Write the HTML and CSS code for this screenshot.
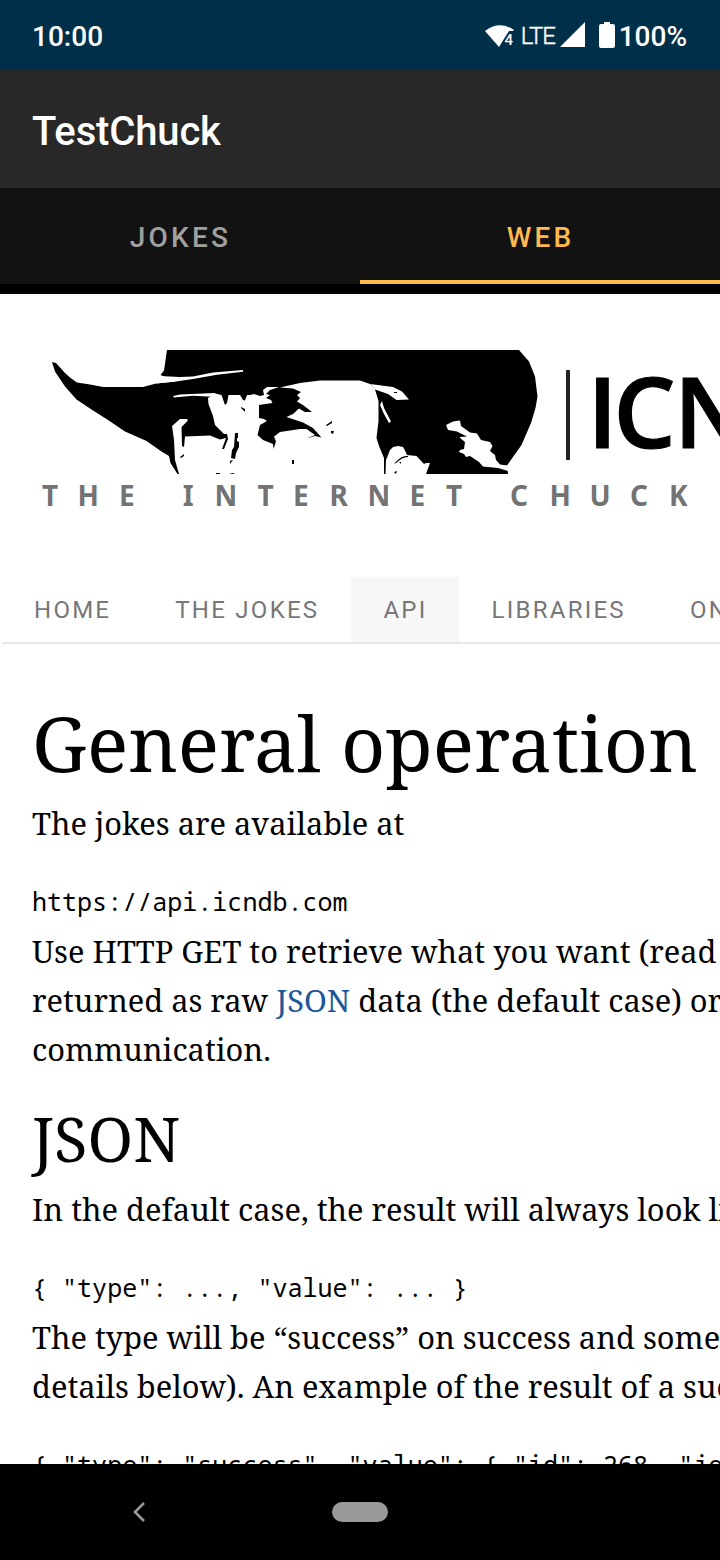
FILE: index.html
```html
<!DOCTYPE html>
<html lang="en">
<head>
<meta charset="utf-8">
<title>TestChuck</title>
<link rel="stylesheet" href="styles.css">
</head>
<body>
<div class="screen">
  <header class="status">
    <span class="clock">10:00</span>
    <div class="indicators">
      <svg class="wifi" width="30" height="26" viewBox="0 0 30 26"><path fill="#fff" d="M0 7Q14 -4 29 6L28 7H24L17 18L14 23Z"/><text class="wifi-num" x="19.500" y="21">4</text></svg>
      <span class="lte">LTE</span>
      <svg class="signal" width="25" height="25" viewBox="0 0 25 25"><path fill="#fff" d="M0 25L25 0V25Z"/></svg>
      <svg class="battery" width="16" height="26" viewBox="0 0 16 26"><path fill="#fff" d="M5 0h6v2h3q2 0 2 2v20q0 2-2 2H2q-2 0-2-2V4q0-2 2-2h3z"/></svg>
      <span class="percent">100%</span>
    </div>
  </header>
  <div class="appbar">TestChuck</div>
  <nav class="tabs">
    <span class="tab">JOKES</span>
    <span class="tab active">WEB</span>
  </nav>
  <main class="web">
    <svg class="logo" width="720" height="283" viewBox="0 294 720 283">
      <path d="M52 362L56 363L65 373Q71 379 77 382.500L90 384.500L103 387H143L156 383.500L176 381.500L160.500 375L164 370.500L167 350H519L529 361.500L535 376.500L537.500 396.500L535.500 408L531 423L521.500 445L507 465.500L508 474H426L430 463H426L424 464L416.500 456L407 455L405 450.500L403 447L398 446L393 447L390 450L386 460L385.500 474H384V458L379 446L376.500 438L378.500 421L378.500 401L375 389.500L370 384L360 380.500H320L300 383L280 387.500L293 388.500L301 392L297 395L300 398L297 401.500L303 405L312 412L305 412L299 408.500L293 414L286.500 417L303 422.500L313 428L321.500 437.500L315 436L306.500 438.500L315 435L306.500 429H300L280 432L274 436.500L276 441.500L273.500 449L273 444L263 440L257.500 435L260 425L267 421L264 419L259 418V405L272.500 403L271 400L266 398L270 395L266 394L270 390L279 387L267 387L263 390L264 395L260 396L254 394L250 395L247 395L245 400.500L243 400L240 395H228.500L227 403L225 405L221.500 395L215 393.500L208 398L208.500 404L213 416L215 425L224 434L227 434L228 439L224 449L222 449L226 438L220 439.500L210 435.500L185 436.500L184 447L182 446L181.500 427L187.500 421V419H180L172 426L174 440L175 460L179 474H177.500L170.500 463L169 456L161.500 451.500L146.500 441L125 431.500L106.500 419L93 410.500L76.500 399.500L65 386.500L55 371.500Z"/>
      <path fill="#fff" d="M159 376L180 377L193 376.500L213 372.500L243 370V371.800L217 374.800L193 379L176 381.500L156 383.500Z"/>
      <path fill="#fff" d="M173 396L180 394.500L215 393L217 397L193 395.800L174 397.500Z"/>
      <path fill="#fff" d="M370 384L393 387L402 391.500L409 399.500L396.500 400L388 394L375 389.500ZM382 401L384 408L391 421.500L389 423L384 414L380 405Z"/>
      <path fill="#fff" d="M446 425L453 421.500L460 420.500L461 426L470 432.500L477 433.500L481 440L490 442L492.500 446L490 451L495 455L496 460L500 464.500L508 465.500V471L498 468L483 466.500L479 462L470 456L466 457L464 454L459 452L460 450L464 449L465 442L460 438V437L467 436.500L457 431.500L448 430Z"/>
      <path d="M235 433h3v5h-1v3l2 1v5l-3 6-1 6-4-1 1-8 2-3zM241 407l4 2v3l-4-4zM230 461l3-1-3 4zM216 473h4v1h-4zM229 474l4-1 2 1zM180 457l4-3v2l-3 2zM326 425l6-4v2l-5 3zM331 431h3l-1 3-2-1zM292 460h2v4h-2zM394 392h3v1h-3zM394 464q7-9 14-8v1q-6 0-12 6zM394 472l3-1-1 3zM399 462h2v2z"/>
      <path class="divider" d="M566 370h4v90h-4z"/>
      <text class="logo-name" x="587.500 613.500 674" y="448">ICN</text>
      <text class="logo-line" y="506" x="42 77.500 119 182.700 214.500 257.500 293 329.500 367.500 409.500 446 510 549.500 589.500 630 669">THEINTERNETCHUCK</text>
    </svg>
    <nav class="menu">
      <span class="item">HOME</span><span class="item">THE JOKES</span><span class="item current">API</span><span class="item">LIBRARIES</span><span class="item">ON THE WEB</span>
    </nav>
    <article class="content">
      <h1>General operation</h1>
      <p>The jokes are available at</p>
      <pre>https://api.icndb.com</pre>
      <p>Use HTTP GET to retrieve what you want (read<br>returned as raw <a>JSON</a> data (the default case) or<br>communication.</p>
      <h2>JSON</h2>
      <p>In the default case, the result will always look like</p>
      <pre>{ "type": ..., "value": ... }</pre>
      <p>The type will be “success” on success and something<br>details below). An example of the result of a successful</p>
      <pre>{ "type": "success", "value": { "id": 268, "joke":</pre>
    </article>
  </main>
  <footer class="navbar">
    <svg class="back" width="14" height="22" viewBox="0 0 14 22"><path fill="none" stroke="#999" stroke-width="2.600" d="M12 2L3 11L12 20"/></svg>
    <span class="pill"></span>
  </footer>
</div>
</body>
</html>
```
FILE: styles.css
```css
body { margin: 0; background: #000; }
.screen { width: 720px; height: 1560px; display: flex; flex-direction: column; overflow: hidden; font-family: Roboto, sans-serif; }
.status { height: 70px; flex: none; box-sizing: border-box; padding: 3px 33px 0 32px; background: #002f49; color: #fff; display: flex; justify-content: space-between; align-items: center; font-size: 28px; font-weight: 500; }
.indicators { display: flex; align-items: center; }
.wifi-num { font: 500 15px Roboto, sans-serif; fill: #fff; stroke: #002f49; stroke-width: 2px; paint-order: stroke; }
.lte { font-size: 24px; font-weight: 300; margin: -1px 5px 0 6px; letter-spacing: -1.2px; -webkit-text-stroke: 0.4px #fff; }
.signal { margin-bottom: 4px; }
.battery { margin: 0 4px 4px 14px; }
.appbar { height: 118px; flex: none; box-sizing: border-box; padding: 3px 32px 0; background: #282828; color: #fff; font-size: 40px; font-weight: 500; line-height: 118px; letter-spacing: -0.15px; }
.tabs { height: 96px; flex: none; display: flex; background: #121212; border-bottom: 10px solid #000; }
.tab { flex: 1; box-sizing: border-box; text-align: center; line-height: 100px; height: 96px; font-size: 28px; font-weight: 500; letter-spacing: 3.2px; padding-left: 1px; color: #a0a0a0; }
.tab.active { color: #ffb94c; border-bottom: 4px solid #ffb94c; }
.web { flex: 1; min-height: 0; background: #fff; overflow: hidden; }
.logo { display: block; }
.logo-name { font: 600 98px "Open Sans", sans-serif; stroke: #000; stroke-width: 1.2px; }
.logo-line { font: 700 28px "Noto Sans", sans-serif; fill: #737373; }
.divider { fill: #222; }
.menu { display: flex; width: 900px; height: 65px; margin-left: 2px; border-bottom: 2px solid #e7e7e7; }
.item { padding: 0 32px; line-height: 66px; font-size: 24px; letter-spacing: 2.26px; color: #777; white-space: nowrap; }
.item.current { background: #f7f7f7; }
.content { width: 1100px; padding: 48px 32px 0; color: #000; font-family: "Noto Serif", "DejaVu Serif Condensed", serif; }
h1, h2, p, pre { margin: 0; font-weight: 400; white-space: nowrap; }
h1 { font-size: 77px; line-height: 102px; margin-bottom: 5.2px; }
h2 { font-size: 61.6px; line-height: 84px; margin-top: 22.3px; margin-bottom: 4.9px; }
p { font-size: 30.8px; line-height: 49px; }
a { color: #1e5799; }
pre { margin-top: 28.2px; font: 25.05px/50.6px "Noto Sans Mono", "DejaVu Sans Mono", monospace; }
.navbar { height: 96px; flex: none; background: #000; display: flex; align-items: center; }
.back { margin-left: 131.5px; }
.pill { width: 56px; height: 20px; margin-left: 186.5px; border-radius: 10px; background: #999; }
```
